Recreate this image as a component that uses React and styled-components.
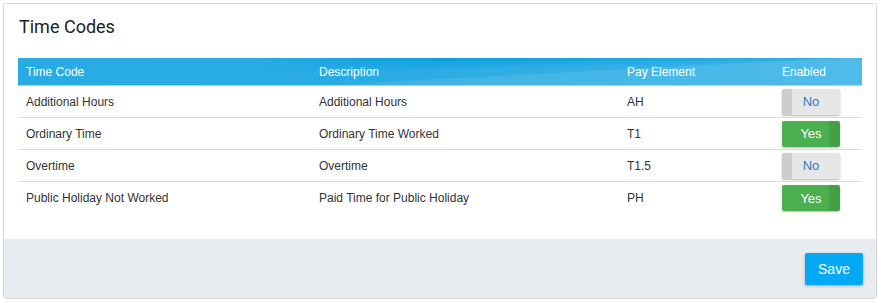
import React from "react";
import styled, { createGlobalStyle } from "styled-components";

const Global = createGlobalStyle`
  html, body { margin: 0; padding: 0; background: #fff; }
  body { font-family: "Liberation Sans", Arial, sans-serif; }
  * { box-sizing: border-box; }
`;

const Page = styled.div`
  padding: 3px 5px 4px 3px;
`;

const Card = styled.section`
  width: 874px;
  height: 296px;
  border: 1px solid #d6d6d6;
  border-radius: 3px;
  background: #fff;
  display: flex;
  flex-direction: column;
  overflow: hidden;
`;

const Body = styled.div`
  flex: 1;
  padding: 11px 14px 0 14px;
`;

const Title = styled.h2`
  margin: 0 0 19px 1px;
  font-family: Roboto, "Liberation Sans", sans-serif;
  font-weight: 400;
  font-size: 18px;
  line-height: 24px;
  color: #222;
`;

const Table = styled.div`
  width: 844px;
`;

const cols = "293px 308px 155px 88px";

/* header strip: flat blue with a darker sweep along the top that fades in
   towards the right, and a faint lighter sheen low on the right */
const HeadRow = styled.div`
  position: relative;
  display: grid;
  grid-template-columns: ${cols};
  height: 28px;
  align-items: center;
  color: #fff;
  font-size: 12px;
  border-bottom: 1px solid #9fd9f2;
  background: linear-gradient(to right, #28abe3 0%, #2aace3 45%, #3bb4e6 100%);

  &::before {
    content: "";
    position: absolute;
    inset: 0;
    background:
      linear-gradient(177deg, rgba(255,255,255,0) 0 60%, rgba(255,255,255,0.1) 61% 100%),
      linear-gradient(178.6deg, rgba(4,156,222,0.9) 0 20%, rgba(4,156,222,0) 48%);
    -webkit-mask-image: linear-gradient(to right, transparent 28%, #000 50%);
    mask-image: linear-gradient(to right, transparent 28%, #000 50%);
    pointer-events: none;
  }
`;

const Cell = styled.div`
  position: relative;
  padding-left: 8px;
  font-size: 12px;
  color: ${(p) => (p.$head ? "#fff" : "#333")};
  white-space: nowrap;
`;

const Row = styled.div`
  display: grid;
  grid-template-columns: ${cols};
  height: 32px;
  align-items: center;
  border-bottom: ${(p) => (p.$last ? "none" : "1px solid #dcdcdc")};
`;

const Toggle = styled.button`
  width: 58px;
  height: 26px;
  margin-left: 8px;
  padding: 0;
  border: none;
  border-radius: 2px;
  font-family: "Liberation Sans", Arial, sans-serif;
  font-size: 13px;
  cursor: pointer;
  box-shadow: 0 1px 2px rgba(0, 0, 0, 0.28);
  color: ${(p) => (p.$on ? "#fff" : "#3779b5")};
  background: ${(p) =>
    p.$on
      ? "linear-gradient(to right, #4caf50 0 47px, #43a047 47px 100%)"
      : "linear-gradient(to right, #cdcdcd 0 10px, #e6e6e6 10px 100%)"};
`;

const Footer = styled.footer`
  height: 59px;
  background: #e9ecef;
  display: flex;
  justify-content: flex-end;
  align-items: flex-start;
  padding: 14px 13px 0 0;
`;

const SaveButton = styled.button`
  width: 58px;
  height: 32px;
  border: none;
  border-radius: 2px;
  background: #03a9f4;
  color: #fff;
  font-family: "Liberation Sans", Arial, sans-serif;
  font-size: 14px;
  box-shadow: 0 1px 3px rgba(0, 0, 0, 0.3);
  cursor: pointer;
`;

const rows = [
  { code: "Additional Hours", desc: "Additional Hours", pay: "AH", on: false },
  { code: "Ordinary Time", desc: "Ordinary Time Worked", pay: "T1", on: true },
  { code: "Overtime", desc: "Overtime", pay: "T1.5", on: false },
  { code: "Public Holiday Not Worked", desc: "Paid Time for Public Holiday", pay: "PH", on: true },
];

export default function App() {
  return (
    <Page>
      <Global />
      <Card>
        <Body>
          <Title>Time Codes</Title>
          <Table>
            <HeadRow>
              <Cell $head>Time Code</Cell>
              <Cell $head>Description</Cell>
              <Cell $head>Pay Element</Cell>
              <Cell $head>Enabled</Cell>
            </HeadRow>
            {rows.map((r, i) => (
              <Row key={r.code} $last={i === rows.length - 1}>
                <Cell>{r.code}</Cell>
                <Cell>{r.desc}</Cell>
                <Cell>{r.pay}</Cell>
                <div>
                  <Toggle $on={r.on}>{r.on ? "Yes" : "No"}</Toggle>
                </div>
              </Row>
            ))}
          </Table>
        </Body>
        <Footer>
          <SaveButton>Save</SaveButton>
        </Footer>
      </Card>
    </Page>
  );
}
